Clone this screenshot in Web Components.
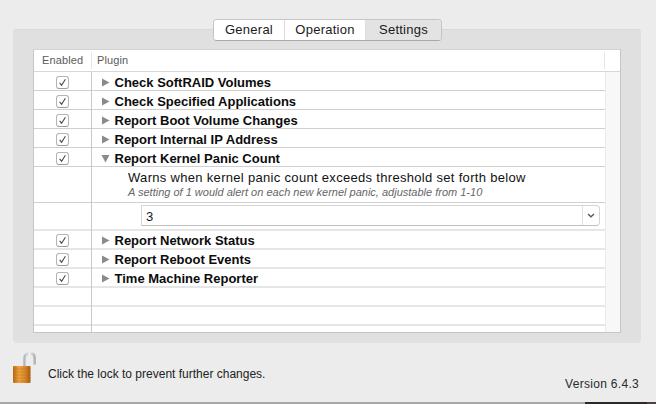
<!DOCTYPE html>
<html>
<head>
<meta charset="utf-8">
<title>Settings</title>
<style>
    html, body { margin: 0; padding: 0; background: #ececec; }
    body { width: 656px; height: 404px; overflow: hidden; font-family: "Liberation Sans", Arial, sans-serif; }
</style>
</head>
<body>
<pref-window>
    <seg-tabs slot="tabs">
        <seg-tab style="width:71px">General</seg-tab>
        <seg-tab style="width:81px">Operation</seg-tab>
        <seg-tab style="width:75px" selected>Settings</seg-tab>
    </seg-tabs>
    <plugin-table>
        <plugin-row checked>Check SoftRAID Volumes</plugin-row>
        <plugin-row checked>Check Specified Applications</plugin-row>
        <plugin-row checked>Report Boot Volume Changes</plugin-row>
        <plugin-row checked>Report Internal IP Address</plugin-row>
        <plugin-row checked open>Report Kernel Panic Count</plugin-row>
        <plugin-detail note="A setting of 1 would alert on each new kernel panic, adjustable from 1-10">Warns when kernel panic count exceeds threshold set forth below</plugin-detail>
        <plugin-select value="3"></plugin-select>
        <plugin-row checked soft>Report Network Status</plugin-row>
        <plugin-row checked soft>Report Reboot Events</plugin-row>
        <plugin-row checked soft>Time Machine Reporter</plugin-row>
        <plugin-row soft blank></plugin-row>
        <plugin-row soft blank></plugin-row>
        <plugin-row soft blank></plugin-row>
        <plugin-row soft blank></plugin-row>
    </plugin-table>
    <lock-note slot="footer">Click the lock to prevent further changes.</lock-note>
    <span slot="version">Version 6.4.3</span>
</pref-window>

<script>
class PrefWindow extends HTMLElement {
    constructor() {
        super();
        this.attachShadow({ mode: 'open' });
        this.shadowRoot.innerHTML = `
            <style>
                :host { display: flex; flex-direction: column; height: 404px; box-sizing: border-box; padding-top: 19px; color: #1c1c1c; }
                .tabs { display: flex; justify-content: flex-start; margin-left: 213px; height: 22px; position: relative; z-index: 1; }
                .panel { box-sizing: border-box; width: 628px; height: 314px; margin: -12px 0 0 13px; padding: 19px 20px 10px; background: #e0e0e0; border-top: 1px solid #d8d8d8; border-radius: 4px; }
                .foot { display: flex; justify-content: space-between; height: 59px; padding-left: 13px; padding-right: 17px; }
                .version { font-size: 12px; line-height: 14px; padding-top: 34px; letter-spacing: .3px; color: #2a2a2a; }
                .edge { display: flex; height: 2px; background: #a8a8a8; }
                .edge i { margin-left: auto; width: 71px; background: linear-gradient(90deg, #2f2730 87%, #4b3f4c 87%); }
            </style>
            <div class="tabs"><slot name="tabs"></slot></div>
            <div class="panel"><slot></slot></div>
            <div class="foot">
                <slot name="footer"></slot>
                <div class="version"><slot name="version"></slot></div>
            </div>
            <div class="edge"><i></i></div>
        `;
    }
}

class SegTabs extends HTMLElement {
    constructor() {
        super();
        this.attachShadow({ mode: 'open' });
        this.shadowRoot.innerHTML = `
            <style>
                :host { display: flex; height: 22px; box-sizing: border-box; background: #fff; border: 1px solid #c4c4c4; border-bottom-color: #a8a8a8; border-radius: 4px; overflow: hidden; }
            </style>
            <slot></slot>
        `;
    }
}

class SegTab extends HTMLElement {
    constructor() {
        super();
        this.attachShadow({ mode: 'open' });
        this.shadowRoot.innerHTML = `
            <style>
                :host { display: block; box-sizing: border-box; text-align: center; font-size: 13px; line-height: 20px; letter-spacing: .25px; color: #1a1a1a; background: #fff; border-right: 1px solid #dedede; }
                :host([selected]) { background: #e3e3e3; border-right: 0; }
            </style>
            <slot></slot>
        `;
    }
}

class PluginTable extends HTMLElement {
    constructor() {
        super();
        this.attachShadow({ mode: 'open' });
        this.shadowRoot.innerHTML = `
            <style>
                :host { display: flex; flex-direction: column; box-sizing: border-box; width: 588px; height: 284px; background: #fff; border: 1px solid #c6c6c6; border-top-color: #d4d4d4; font-size: 11px; }
                .head { display: flex; height: 22px; box-sizing: border-box; padding-bottom: 2px; border-bottom: 1px solid #d8d8d8; color: #5a5a5a; line-height: 20px; letter-spacing: .12px; flex: none; }
                .head span { box-sizing: border-box; height: 17px; margin-top: 2px; line-height: 17px; border-right: 1px solid #e6e6e6; }
                .enabled { width: 58px; padding-left: 8px; }
                .plugin { width: 513px; padding-left: 5px; }
                .body { display: flex; flex: 1; min-height: 0; overflow: hidden; }
                .rows { width: 571px; flex: none; overflow: hidden; position: relative; }
                /* column rule sits over the row lines so it stays unbroken */
                .rows::after { content: ""; position: absolute; top: 0; bottom: 0; left: 57px; width: 1px; background: #c8c8c8; }
                .gutter { flex: 1; background: #f8f8f8; border-left: 1px solid #ebebeb; }
            </style>
            <div class="head"><span class="enabled">Enabled</span><span class="plugin">Plugin</span></div>
            <div class="body">
                <div class="rows"><slot></slot></div>
                <div class="gutter"></div>
            </div>
        `;
    }
}

class PluginRow extends HTMLElement {
    constructor() {
        super();
        this.attachShadow({ mode: 'open' });
        const checked = this.hasAttribute('checked');
        const blank = this.hasAttribute('blank');
        const tri = this.hasAttribute('open')
            ? '<svg width="9" height="9" viewBox="0 0 9 9"><path d="M0.5 1H8.5L4.5 8.5Z" fill="#8a8a8a"/></svg>'
            : '<svg width="9" height="9" viewBox="0 0 9 9"><path d="M1 .5V8.5L8.5 4.5Z" fill="#8a8a8a"/></svg>';
        this.shadowRoot.innerHTML = `
            <style>
                :host { display: flex; height: 19px; box-sizing: border-box; border-bottom: 1px solid #d0d0d0; --top: 1px; }
                :host([soft]) { border-bottom: 2px solid #e6e6e6; --top: 0px; }
                .check { box-sizing: border-box; display: flex; justify-content: center; padding: calc(3px + var(--top)) 1px 0 0; width: 58px; }
                .box { width: 13px; height: 13px; box-sizing: border-box; border: 1px solid #b4b4b4; border-bottom-color: #9c9c9c; border-radius: 3px; background: #fff; display: block; }
                .name { display: flex; gap: 4.5px; padding-left: 9px; padding-top: var(--top); font-size: 13px; font-weight: bold; line-height: 20px; color: #0c0c0c; white-space: nowrap; }
                .name svg { margin-top: 5px; flex: none; }
            </style>
            <div class="check">${checked ? `<svg class="box" viewBox="0 0 11 11"><path d="M2.6 5.8L4.6 8.2L8.4 2.2" fill="none" stroke="#4a4a4a" stroke-width="1.1"/></svg>` : ''}</div>
            <div class="name">${blank ? '' : tri}<slot></slot></div>
        `;
    }
}

class PluginDetail extends HTMLElement {
    constructor() {
        super();
        this.attachShadow({ mode: 'open' });
        this.shadowRoot.innerHTML = `
            <style>
                :host { display: flex; height: 36px; box-sizing: border-box; border-bottom: 1px solid #d0d0d0; }
                .side { width: 58px; flex: none; }
                .text { padding: 3px 0 0 36px; }
                .main { font-size: 13px; line-height: 16px; letter-spacing: .31px; color: #111; white-space: nowrap; }
                .note { font-size: 11px; font-style: italic; line-height: 13px; color: #666; white-space: nowrap; }
            </style>
            <div class="side"></div>
            <div class="text">
                <div class="main"><slot></slot></div>
                <div class="note">${this.getAttribute('note')}</div>
            </div>
        `;
    }
}

class PluginSelect extends HTMLElement {
    constructor() {
        super();
        this.attachShadow({ mode: 'open' });
        this.shadowRoot.innerHTML = `
            <style>
                :host { display: flex; height: 28px; box-sizing: border-box; border-bottom: 2px solid #e6e6e6; }
                .side { width: 58px; flex: none; }
                .field { display: flex; box-sizing: border-box; width: 459px; height: 21px; margin: 2px 0 0 49px; background: #fff; border: 1px solid #d4d4d4; border-bottom-color: #c0c0c0; border-radius: 1px 4px 4px 1px; }
                .val { flex: 1; padding-left: 4px; font-size: 13px; line-height: 22px; color: #1a1a1a; }
                .arrow { width: 17px; box-sizing: border-box; border-left: 1px solid #e0e0e0; display: flex; align-items: center; justify-content: center; }
            </style>
            <div class="side"></div>
            <div class="field">
                <div class="val">${this.getAttribute('value')}</div>
                <div class="arrow"><svg width="8" height="5" viewBox="0 0 8 5"><path d="M1 1L4 3.8L7 1" fill="none" stroke="#555" stroke-width="1.3"/></svg></div>
            </div>
        `;
    }
}

class LockNote extends HTMLElement {
    constructor() {
        super();
        this.attachShadow({ mode: 'open' });
        this.shadowRoot.innerHTML = `
            <style>
                :host { display: flex; gap: 12px; padding-top: 9px; }
                svg { flex: none; }
                .msg { font-size: 12px; line-height: 14px; padding-top: 15px; color: #222; }
            </style>
            <svg width="23" height="33" viewBox="0 0 23 33">
                <defs>
                    <linearGradient id="body" x1="0" x2="1" y1="0" y2="0">
                        <stop offset="0" stop-color="#b86a12"/>
                        <stop offset=".35" stop-color="#eea63e"/>
                        <stop offset=".7" stop-color="#d9862a"/>
                        <stop offset="1" stop-color="#a95c0e"/>
                    </linearGradient>
                    <linearGradient id="steel" x1="0" x2="1" y1="0" y2="0">
                        <stop offset="0" stop-color="#b4b9bd"/>
                        <stop offset=".5" stop-color="#eef0f2"/>
                        <stop offset="1" stop-color="#aeb3b8"/>
                    </linearGradient>
                </defs>
                <path d="M11.5 15V6.5C11.5 3 13.8 1.4 16.8 1.4S21.6 3 21.6 6.5V12.5" fill="none" stroke="url(#steel)" stroke-width="2.6"/>
                <rect x="0" y="14" width="17.5" height="17" rx="1" fill="url(#body)"/>
                <path d="M0 17h17.5M0 20h17.5M0 23h17.5M0 26h17.5M0 29h17.5" stroke="#a8620f" stroke-opacity=".35" stroke-width="1"/>
            </svg>
            <div class="msg"><slot></slot></div>
        `;
    }
}

customElements.define('pref-window', PrefWindow);
customElements.define('seg-tabs', SegTabs);
customElements.define('seg-tab', SegTab);
customElements.define('plugin-table', PluginTable);
customElements.define('plugin-row', PluginRow);
customElements.define('plugin-detail', PluginDetail);
customElements.define('plugin-select', PluginSelect);
customElements.define('lock-note', LockNote);
</script>
</body>
</html>
